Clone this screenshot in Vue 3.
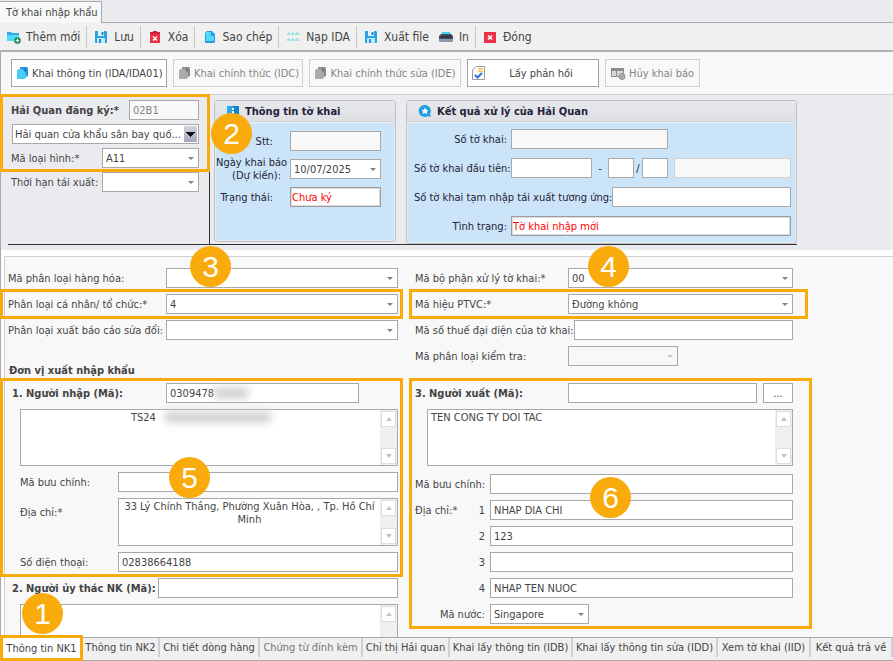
<template>
  <div class="app">
    <div class="window-tabs">
      <button type="button" class="window-tab">Tờ khai nhập khẩu</button>
    </div>

    <div class="toolbar">
      <button v-for="t in tools" :key="t.icon" type="button" class="tool" :class="{ divided: t.divided }">
        <svg v-if="t.icon === 'add'" width="16" height="16" viewBox="0 0 16 16">
          <path d="M2 3h4l1 1h7v8H2z" fill="#4fdcfb" />
          <path d="M2 3h4l1 1h7v2H2z" fill="#35a9e6" />
          <circle cx="12.500" cy="11.500" r="3.300" fill="#1d8a4c" />
          <path d="M12.500 9.700v3.600M10.700 11.500h3.600" stroke="#fff" stroke-width="1.100" />
        </svg>
        <svg v-else-if="t.icon === 'save' || t.icon === 'export'" width="16" height="16" viewBox="0 0 16 16">
          <path d="M2 2h11l1 1v11H2z" fill="#27a3e2" />
          <path d="M5 2h6v5H5z" fill="#dff3fc" />
          <path d="M8.500 3h2v3h-2z" fill="#2583c4" />
          <path d="M4 9h8v5H4z" fill="#bfe9fa" />
          <path d="M6 10h2v4H6z" fill="#2a92d2" />
        </svg>
        <svg v-else-if="t.icon === 'trash'" width="16" height="16" viewBox="0 0 16 16">
          <path d="M3 3h3V2h4v1h3v2H3z" fill="#c9243c" />
          <path d="M3 5h10v9H3z" fill="#ec3046" />
          <path d="M6 7.500l4 4M10 7.500l-4 4" stroke="#fff" stroke-width="1.500" />
        </svg>
        <svg v-else-if="t.icon === 'copy'" width="16" height="16" viewBox="0 0 16 16">
          <path d="M4 4l2-2h5l3 3v8l-1 1H4z" fill="#2a9ee0" />
          <path d="M5 3h5v4h3v5H5z" fill="#4fdcfb" />
        </svg>
        <svg v-else-if="t.icon === 'load'" width="16" height="16" viewBox="0 0 16 16">
          <path d="M2 5h13M2 11h13" stroke="#55cfd6" stroke-dasharray="3 1" />
          <path d="M4 3v4M8 3v4M12 3v4M4 9v4M8 9v4M12 9v4" stroke="#7adbe0" stroke-dasharray="1 1" />
        </svg>
        <svg v-else-if="t.icon === 'print'" width="16" height="16" viewBox="0 0 16 16">
          <path d="M4 3h8l1 3H3z" fill="#45cdf2" />
          <path d="M1 7l2-2h10l2 2v3H1z" fill="#424b57" />
          <path d="M1 10h14v3H1z" fill="#8d9aad" />
          <path d="M3 8h10" stroke="#1c232d" />
        </svg>
        <svg v-else width="16" height="16" viewBox="0 0 16 16">
          <path d="M2 3h12v11H2z" fill="#e8304a" />
          <path d="M6 6.500l4 4M10 6.500l-4 4" stroke="#fff" stroke-width="1.600" />
        </svg>
        <span>{{ t.text }}</span>
      </button>
    </div>

    <div class="actions">
      <button
        v-for="a in actions"
        :key="a.text"
        type="button"
        class="action"
        :class="a.kind"
        :disabled="a.disabled"
      >
        <svg v-if="a.icon === 'pages'" width="14" height="16" viewBox="0 0 14 16">
          <path d="M4 2h7l1 1v8l-2 1H4z" :fill="a.disabled ? '#8d8d8d' : '#2c8fdc'" />
          <path d="M1 5l2-1h4l3 3v6l-2 1H1z" :fill="a.disabled ? '#ababab' : '#45cdf5'" />
          <path d="M7 4h3v4z" :fill="a.disabled ? '#6f6f6f' : '#1a6fc0'" />
        </svg>
        <svg v-else-if="a.icon === 'check'" width="14" height="16" viewBox="0 0 14 16">
          <path d="M4 1.500h8.500v13h-12V5z" fill="#fff" stroke="#9c9c9c" />
          <path d="M6 4h5M6 6.500h5" stroke="#f8c33c" stroke-width="1.500" />
          <path d="M3 10l2.500 2.500L10 8" fill="none" stroke="#2f6fe4" stroke-width="2" />
        </svg>
        <svg v-else width="16" height="16" viewBox="0 0 16 16">
          <path d="M1 3h13v9H1z" fill="#8c8c8c" />
          <path d="M2 6h4v5H2zM7 6h6v5H7z" fill="#d6d6d6" />
          <circle cx="12" cy="11.500" r="3" fill="#b4b4b4" stroke="#8f8f8f" />
          <path d="M10 13.500l4-4" stroke="#8f8f8f" />
        </svg>
        <span>{{ a.text }}</span>
      </button>
    </div>

    <div class="summary">
      <div class="summary-inner">
        <div class="register">
          <div class="mark"></div>
          <div class="row">
            <label for="office" class="bold office-label">Hải Quan đăng ký:*</label>
            <input id="office" class="grow" v-model="office" disabled />
          </div>
          <div class="pick office-pick">
            <select aria-label="Chi cục Hải quan">
              <option>Hải quan cửa khẩu sân bay quố...</option>
            </select>
          </div>
          <div class="row">
            <label for="kind" class="register-label">Mã loại hình:*</label>
            <div class="pick grow">
              <select id="kind"><option>A11</option></select>
            </div>
          </div>
          <div class="row">
            <label for="deadline" class="register-label">Thời hạn tái xuất:</label>
            <div class="pick grow">
              <select id="deadline"><option></option></select>
            </div>
          </div>
        </div>

        <section class="panel info">
          <h2>
            <svg width="14" height="14" viewBox="0 0 14 14">
              <path d="M1 2h12v11H1z" fill="#28a9e8" />
              <path d="M7 2h6v11H7z" fill="#1683cf" />
              <path d="M7 4v2M7 7v4" stroke="#fff" stroke-width="2" />
            </svg>
            Thông tin tờ khai
          </h2>
          <div class="panel-body">
            <div class="row">
              <label for="stt" class="info-label short">Stt:</label>
              <input id="stt" class="grow readonly" readonly />
            </div>
            <div class="row">
              <label for="date" class="info-label">Ngày khai báo<br /><span>(Dự kiến):</span></label>
              <div class="pick grow">
                <select id="date"><option>10/07/2025</option></select>
              </div>
            </div>
            <div class="row">
              <label for="state" class="info-label short">Trạng thái:</label>
              <input id="state" class="grow alert" v-model="state" />
            </div>
          </div>
        </section>

        <section class="panel result">
          <h2>
            <svg width="14" height="14" viewBox="0 0 14 14">
              <path d="M7 1a6 6 0 1 0 3 11l3 1-1-3A6 6 0 0 0 7 1z" fill="#1c9be6" />
              <path d="M7 3.500l1.100 2.300 2.500.3-1.800 1.700.5 2.500L7 9l-2.300 1.300.5-2.500-1.800-1.700 2.500-.3z" fill="#fff" />
            </svg>
            Kết quả xử lý của Hải Quan
          </h2>
          <div class="panel-body">
            <div class="row">
              <label for="no" class="result-label">Số tờ khai:</label>
              <input id="no" class="number readonly" readonly />
            </div>
            <div class="row">
              <label for="first" class="result-label">Số tờ khai đầu tiên:</label>
              <input id="first" class="first" />
              <span class="dash">-</span>
              <input class="part" aria-label="Số nhánh" />
              <span class="slash">/</span>
              <input class="part" aria-label="Tổng số nhánh" />
              <input class="grow extra" aria-label="Số tờ khai kèm theo" disabled />
            </div>
            <div class="row">
              <label for="temp" class="long-label">Số tờ khai tạm nhập tái xuất tương ứng:</label>
              <input id="temp" class="grow" />
            </div>
            <div class="row">
              <label for="status" class="result-label">Tình trạng:</label>
              <input id="status" class="grow alert" v-model="status" />
            </div>
          </div>
        </section>
        <span class="badge badge-2">2</span>
      </div>
    </div>

    <div class="form-area">
      <div class="form-clip">
        <div class="form">
          <div class="column">
            <div class="general">
              <div class="row">
                <label for="goods" class="left-label">Mã phân loại hàng hóa:</label>
                <div class="pick grow"><select id="goods"><option></option></select></div>
              </div>
              <div class="row marked">
                <div class="mark mark-left"></div>
                <label for="person" class="left-label">Phân loại cá nhân/ tổ chức:*</label>
                <div class="pick grow"><select id="person"><option>4</option></select></div>
              </div>
              <div class="row">
                <label for="report" class="left-label">Phân loại xuất báo cáo sửa đổi:</label>
                <div class="pick grow"><select id="report"><option></option></select></div>
              </div>
              <h3>Đơn vị xuất nhập khẩu</h3>
            </div>

            <div class="party">
              <div class="mark mark-left"></div>
              <div class="row smudged">
                <label for="importer" class="bold party-label">1. Người nhập (Mã):</label>
                <input id="importer" class="importer" v-model="importer" />
                <span class="smudge smudge-code"></span>
              </div>
              <div class="memo memo-name smudged">
                <textarea class="importer-name" aria-label="Tên người nhập" v-model="importerName"></textarea>
                <div class="scroll"><button v-for="d in arrows" :key="d" type="button" :class="d" :aria-label="d"></button></div>
                <span class="smudge smudge-name"></span>
              </div>
              <div class="row">
                <label for="post1" class="sub-label">Mã bưu chính:</label>
                <input id="post1" class="grow" />
              </div>
              <div class="line">
                <label for="addr1" class="sub-label">Địa chỉ:*</label>
                <div class="memo memo-address">
                  <textarea id="addr1" class="center" v-model="address"></textarea>
                  <div class="scroll"><button v-for="d in arrows" :key="d" type="button" :class="d" :aria-label="d"></button></div>
                </div>
              </div>
              <div class="row">
                <label for="phone" class="sub-label">Số điện thoại:</label>
                <input id="phone" class="grow" v-model="phone" />
              </div>
            </div>

            <div class="row">
              <label for="trustee" class="bold trustee-label">2. Người ủy thác NK (Mã):</label>
              <input id="trustee" class="grow" />
            </div>
            <div class="memo memo-name">
              <textarea aria-label="Tên người ủy thác"></textarea>
              <div class="scroll"><button v-for="d in arrows" :key="d" type="button" :class="d" :aria-label="d"></button></div>
            </div>
          </div>

          <div class="column">
            <div class="general">
              <div class="row">
                <label for="dept" class="right-label">Mã bộ phận xử lý tờ khai:*</label>
                <div class="pick grow"><select id="dept"><option>00</option></select></div>
              </div>
              <div class="row marked">
                <div class="mark mark-right"></div>
                <label for="transport" class="right-label">Mã hiệu PTVC:*</label>
                <div class="pick grow"><select id="transport"><option>Đường không</option></select></div>
              </div>
              <div class="row">
                <label for="tax" class="right-label">Mã số thuế đại diện của tờ khai:</label>
                <input id="tax" class="grow" />
              </div>
              <div class="row">
                <label for="check" class="right-label">Mã phân loại kiểm tra:</label>
                <div class="pick check"><select id="check" disabled><option></option></select></div>
              </div>
            </div>

            <div class="party">
              <div class="mark mark-right wide"></div>
              <div class="row">
                <label for="exporter" class="bold right-label">3. Người xuất (Mã):</label>
                <input id="exporter" class="grow" />
                <button type="button" class="more">...</button>
              </div>
              <div class="memo memo-name">
                <textarea aria-label="Tên người xuất" v-model="exporterName"></textarea>
                <div class="scroll"><button v-for="d in arrows" :key="d" type="button" :class="d" :aria-label="d"></button></div>
              </div>
              <div class="row post">
                <label for="post3" class="address-label">Mã bưu chính:</label>
                <input id="post3" class="grow" />
              </div>
              <div v-for="(line, i) in exporterLines" :key="i" class="row">
                <label :for="'line' + i" class="address-label numbered">
                  <span>{{ i === 0 ? "Địa chỉ:*" : "" }}</span>
                  <span>{{ i + 1 }}</span>
                </label>
                <input :id="'line' + i" class="grow" v-model="exporterLines[i]" />
              </div>
              <div class="row">
                <label for="country" class="address-label country-label">Mã nước:</label>
                <div class="pick country"><select id="country"><option>Singapore</option></select></div>
              </div>
            </div>
          </div>
        </div>
      </div>
      <span v-for="n in [3, 4, 5, 6]" :key="n" class="badge" :class="'badge-' + n">{{ n }}</span>
    </div>

    <div class="page-tabs">
      <button
        v-for="(p, i) in pages"
        :key="p"
        type="button"
        class="page-tab"
        :class="{ active: i === 0, muted: i === 3 }"
      >
        {{ p }}
      </button>
      <span class="badge badge-1">1</span>
    </div>
  </div>
</template>

<script setup>
import { ref } from "vue";

const tools = [
  { icon: "add", text: "Thêm mới", divided: true },
  { icon: "save", text: "Lưu", divided: true },
  { icon: "trash", text: "Xóa", divided: true },
  { icon: "copy", text: "Sao chép", divided: true },
  { icon: "load", text: "Nạp IDA", divided: true },
  { icon: "export", text: "Xuất file" },
  { icon: "print", text: "In", divided: true },
  { icon: "close", text: "Đóng" },
];

const actions = [
  { icon: "pages", text: "Khai thông tin (IDA/IDA01)", kind: "a-info" },
  { icon: "pages", text: "Khai chính thức (IDC)", kind: "a-main", disabled: true },
  { icon: "pages", text: "Khai chính thức sửa (IDE)", kind: "a-edit", disabled: true },
  { icon: "check", text: "Lấy phản hồi", kind: "a-reply" },
  { icon: "cancel", text: "Hủy khai báo", kind: "a-cancel", disabled: true },
];

const pages = [
  "Thông tin NK1",
  "Thông tin NK2",
  "Chi tiết dòng hàng",
  "Chứng từ đính kèm",
  "Chỉ thị Hải quan",
  "Khai lấy thông tin (IDB)",
  "Khai lấy thông tin sửa (IDD)",
  "Xem tờ khai (IID)",
  "Kết quả trả về",
];

const arrows = ["up", "down"];

const office = ref("02B1");
const state = ref("Chưa ký");
const status = ref("Tờ khai nhập mới");
const importer = ref("0309478");
const importerName = ref("TS24");
const address = ref("33 Lý Chính Thắng, Phường Xuân Hòa, , Tp. Hồ Chí Minh");
const phone = ref("02838664188");
const exporterName = ref("TEN CONG TY DOI TAC");
const exporterLines = ref(["NHAP DIA CHI", "123", "", "NHAP TEN NUOC"]);
</script>

<style>
body {
  background: #f0f0f0;
}
</style>

<style scoped>
.app {
  display: flex;
  flex-direction: column;
  height: 100vh;
  overflow: hidden;
  background: #eaebef;
  color: #444;
  font-family: "DejaVu Sans Condensed", "Noto Sans", sans-serif;
  font-size: 11px;
  line-height: 13px;
}

.app *,
.app *::after {
  box-sizing: border-box;
}

button,
input,
select,
textarea {
  margin: 0;
  color: inherit;
  font: inherit;
}

button {
  white-space: nowrap;
}

label {
  flex: none;
  white-space: nowrap;
}

/* Window tab and toolbar */
.window-tabs {
  flex: none;
  height: 23px;
  padding-top: 1px;
  border-bottom: 1px solid #a9a9a9;
}

.window-tab {
  height: 22px;
  padding: 0 3px 0 6px;
  border: 1px solid #a9a9a9;
  border-left: none;
  border-bottom: none;
  background: #f8f8f8;
}

.toolbar {
  display: flex;
  flex: none;
  align-items: center;
  height: 29px;
  padding-top: 1px;
  border-bottom: 2px solid #b2b2b2;
  background: #f0f0f0;
  font-size: 12px;
}

.tool {
  display: flex;
  align-items: center;
  gap: 5px;
  height: 22px;
  padding: 0 3px 0 6px;
  border: none;
  background: none;
}

.tool.divided {
  padding-right: 6px;
  border-right: 1px solid #c6c6c6;
}

.tool:first-child {
  padding-left: 5px;
}

.tool svg,
.action svg {
  flex: none;
}

/* Declaration actions */
.actions {
  display: flex;
  flex: none;
  gap: 6px;
  height: 43px;
  padding: 7px 10px;
  border-bottom: 1px solid #d0d0d0;
  border-left: 1px solid #a9a9a9;
  background: #f8f8f8;
}

.action {
  display: flex;
  align-items: center;
  gap: 2px;
  height: 28px;
  padding: 0 4px;
  border: 1px solid #a3a3a3;
  background: #fff;
}

.action span {
  flex: 1;
  text-align: center;
}

.action:disabled {
  border-color: #d0d0d0;
  background: #f8f8f8;
  color: #858585;
}

.a-info {
  width: 156px;
}

.a-main {
  width: 130px;
}

.a-edit {
  width: 152px;
}

.a-reply {
  width: 132px;
}

.a-cancel {
  width: 95px;
}

/* Fields */
.row {
  display: flex;
  align-items: center;
  height: 20px;
}

.grow {
  flex: 1;
  min-width: 0;
}

.bold {
  font-weight: bold;
}

input,
select,
.more {
  height: 20px;
  padding: 0 3px;
  border: 1px solid #a9a9a9;
  border-radius: 0;
  outline: none;
  background: #fff;
}

input:disabled,
select:disabled,
.readonly {
  background: #f8f8f8;
  color: #858585;
}

.pick {
  position: relative;
  height: 20px;
}

.pick select {
  display: block;
  width: 100%;
  appearance: none;
  opacity: 1;
}

.pick::after {
  content: "";
  position: absolute;
  top: 9px;
  right: 5px;
  border: 3px solid transparent;
  border-top-color: #808080;
  border-bottom: none;
  pointer-events: none;
}

.alert {
  padding: 0 1px;
  border-color: #9c9c9c;
  box-shadow: inset 0 0 0 1px #dcdcdc;
  color: #f00;
}

.mark {
  position: absolute;
  z-index: 1;
  border: 3px solid #f9ab0b;
  pointer-events: none;
}

.badge {
  position: absolute;
  z-index: 2;
  width: 41px;
  height: 41px;
  border-radius: 50%;
  background: #f9ab0b;
  color: #fff;
  font-family: "Liberation Sans", sans-serif;
  font-size: 30px;
  line-height: 41px;
  text-align: center;
}

/* Summary area */
.summary {
  flex: none;
  padding: 0 0 5px;
  border-left: 1px solid #a9a9a9;
}

.summary-inner {
  position: relative;
  display: flex;
  align-items: flex-start;
  width: 100%;
  max-width: 796px;
  height: 150px;
  background: linear-gradient(#333, #333) 7px 100% / 100% 1px no-repeat;
}

.register {
  position: relative;
  display: flex;
  flex: none;
  flex-direction: column;
  gap: 4px;
  width: 209px;
  height: 149px;
  padding: 5px 10px 0 10px;
  border-right: 1px solid #333;
}

.register .mark {
  top: -1px;
  right: -1px;
  left: -1px;
  height: 78px;
}

.office-label {
  width: 118px;
}

.office-pick {
  margin-left: 1px;
}

.office-pick select {
  padding: 0 2px;
}

.office-pick::after {
  top: 2px;
  right: 2px;
  width: 13px;
  height: 16px;
  border: none;
  background:
    conic-gradient(from 315deg at 50% 100%, #111 90deg, transparent 0) 2px 6px / 9px 5px no-repeat,
    linear-gradient(#d3d3e0, #a5a5c2);
  transform: rotate(0deg);
  clip-path: none;
}

.register-label {
  width: 91px;
}

.panel {
  margin-top: 5px;
  border: 1px solid #bfc0c4;
  border-radius: 3px;
  background: #eaebef;
  color: #22223a;
}

.panel h2 {
  display: flex;
  align-items: center;
  gap: 5px;
  height: 21px;
  margin: 0;
  padding: 0 11px;
  border-bottom: 1px solid #d4d5d9;
  background: linear-gradient(#e7e8eb, #dfe0e4);
  font-size: 11px;
}

.panel-body {
  display: flex;
  flex-direction: column;
  margin: 1px;
  background: #cce4f7;
}

.panel input,
.panel select {
  color: #444;
}

.panel .alert {
  color: #f00;
}

.info {
  flex: none;
  width: 182px;
  margin-left: 4px;
}

.info .panel-body {
  gap: 8px;
  height: 117px;
  padding: 8px 13px 0 0;
}

.info-label {
  width: 74px;
  padding-right: 4px;
  text-align: right;
}

.info-label.short {
  padding-right: 17px;
}

.info-label span {
  padding-right: 5px;
}

.result {
  flex: 1;
  min-width: 0;
  margin-left: 10px;
}

.result .panel-body {
  gap: 9px;
  height: 119px;
  padding: 6px 4px 0 6px;
}

.result-label {
  width: 97px;
  padding-right: 4px;
  text-align: right;
}

.long-label {
  min-width: 194px;
}

.number {
  width: 157px;
}

.first {
  width: 81px;
}

.dash {
  width: 16px;
  text-align: center;
}

.slash {
  width: 8px;
  text-align: center;
}

.part {
  width: 26px;
}

.extra {
  margin-left: 6px;
}

.panel .extra {
  border-color: #d0d0d0;
}

/* Main form */
.form-area {
  position: relative;
  display: flex;
  flex: 1;
  min-height: 0;
}

.form-clip {
  flex: 1;
  min-width: 0;
  padding: 6px 0 0 4px;
  overflow: hidden;
  background: linear-gradient(to right, #a9a9a9 1px, #fff 1px);
}

.form {
  display: grid;
  grid-template-columns: minmax(340px, 390px) minmax(340px, 378px);
  gap: 17px;
  min-height: 100%;
  padding: 11px 0 0 3px;
  border-top: 1px solid #d0d0d0;
  border-left: 1px solid #d0d0d0;
  background: #f8f8f8;
}

.column,
.general,
.party {
  display: flex;
  flex-direction: column;
  gap: 6px;
}

.general {
  min-height: 109px;
}

.marked,
.party,
.smudged {
  position: relative;
}

.mark-left {
  top: -5px;
  right: -5px;
  bottom: -5px;
  left: -8px;
}

.mark-right {
  top: -5px;
  right: -15px;
  bottom: -5px;
  left: -6px;
}

.mark-right.wide {
  right: -19px;
}

h3 {
  margin: auto 0 0 1px;
  font-size: 11px;
  line-height: 12px;
}

.left-label {
  width: 158px;
}

.right-label {
  min-width: 153px;
}

.party-label {
  width: 158px;
  padding-left: 4px;
}

.trustee-label {
  width: 150px;
  padding-left: 4px;
}

.sub-label {
  width: 110px;
  padding-left: 12px;
}

.address-label {
  width: 75px;
}

.numbered {
  display: flex;
  justify-content: space-between;
  padding-right: 5px;
}

.country-label {
  padding-right: 5px;
  text-align: right;
}

.importer {
  width: 193px;
}

.check {
  width: 110px;
}

.check::after {
  opacity: 0.4;
}

.country {
  width: 99px;
}

.more {
  width: 30px;
  margin-left: 6px;
}

.post {
  margin-top: 2px;
}

.line {
  display: flex;
}

.line .sub-label {
  padding-top: 8px;
}

.memo {
  display: flex;
  flex: none;
  border: 1px solid #a9a9a9;
  background: #fff;
}

.memo-name {
  height: 57px;
  margin-left: 12px;
}

.memo-address {
  flex: 1;
  height: 48px;
}

.memo textarea {
  flex: 1;
  min-width: 0;
  padding: 1px 3px;
  border: none;
  outline: none;
  background: none;
  resize: none;
  overflow: hidden;
}

.memo .center {
  text-align: center;
}

.memo .importer-name {
  padding-left: 110px;
}

.scroll {
  display: flex;
  flex: none;
  flex-direction: column;
  justify-content: space-between;
  width: 17px;
  padding: 1px;
  background: #f0f0f0;
}

.scroll button {
  display: flex;
  align-items: center;
  justify-content: center;
  height: 16px;
  padding: 0;
  border: 1px solid #dedede;
  background: #fff;
}

.scroll button::after {
  content: "";
  border: 3px solid transparent;
}

.scroll .up::after {
  border-top: none;
  border-bottom: 4px solid #c4c4c4;
}

.scroll .down::after {
  border-top: 4px solid #c4c4c4;
  border-bottom: none;
}

/* Hidden customer data */
.smudge {
  position: absolute;
  background: #ccc;
  filter: blur(4px);
}

.smudge-code {
  top: 5px;
  left: 206px;
  width: 34px;
  height: 10px;
}

.smudge-name {
  top: 2px;
  left: 144px;
  width: 106px;
  height: 10px;
}

/* Bottom tabs */
.page-tabs {
  position: relative;
  display: grid;
  flex: none;
  grid-template-columns: 83fr 77fr 100fr 103fr 87fr 123fr 145fr 93fr 82fr;
  height: 24px;
  padding-bottom: 3px;
  border-top: 1px solid #a9a9a9;
  background: linear-gradient(#a9a9a9, #a9a9a9) 0 22px / 100% 1px no-repeat #f0f0f0;
}

.page-tab {
  height: 19px;
  padding: 0;
  border: none;
  border-right: 2px solid #d0d0d0;
  background: #f0f0f0;
}

.page-tab.active {
  z-index: 1;
  height: 26px;
  margin-top: -3px;
  border: 3px solid #f9ab0b;
  background: #fff;
}

.page-tab.muted {
  color: #777;
}

.badge-1 {
  top: -45px;
  left: 22px;
}

.badge-2 {
  top: 18px;
  left: 210px;
}

.badge-3 {
  top: -4px;
  left: 190px;
}

.badge-4 {
  top: -4px;
  left: 588px;
}

.badge-5 {
  top: 207px;
  left: 169px;
}

.badge-6 {
  top: 227px;
  left: 590px;
}
</style>
